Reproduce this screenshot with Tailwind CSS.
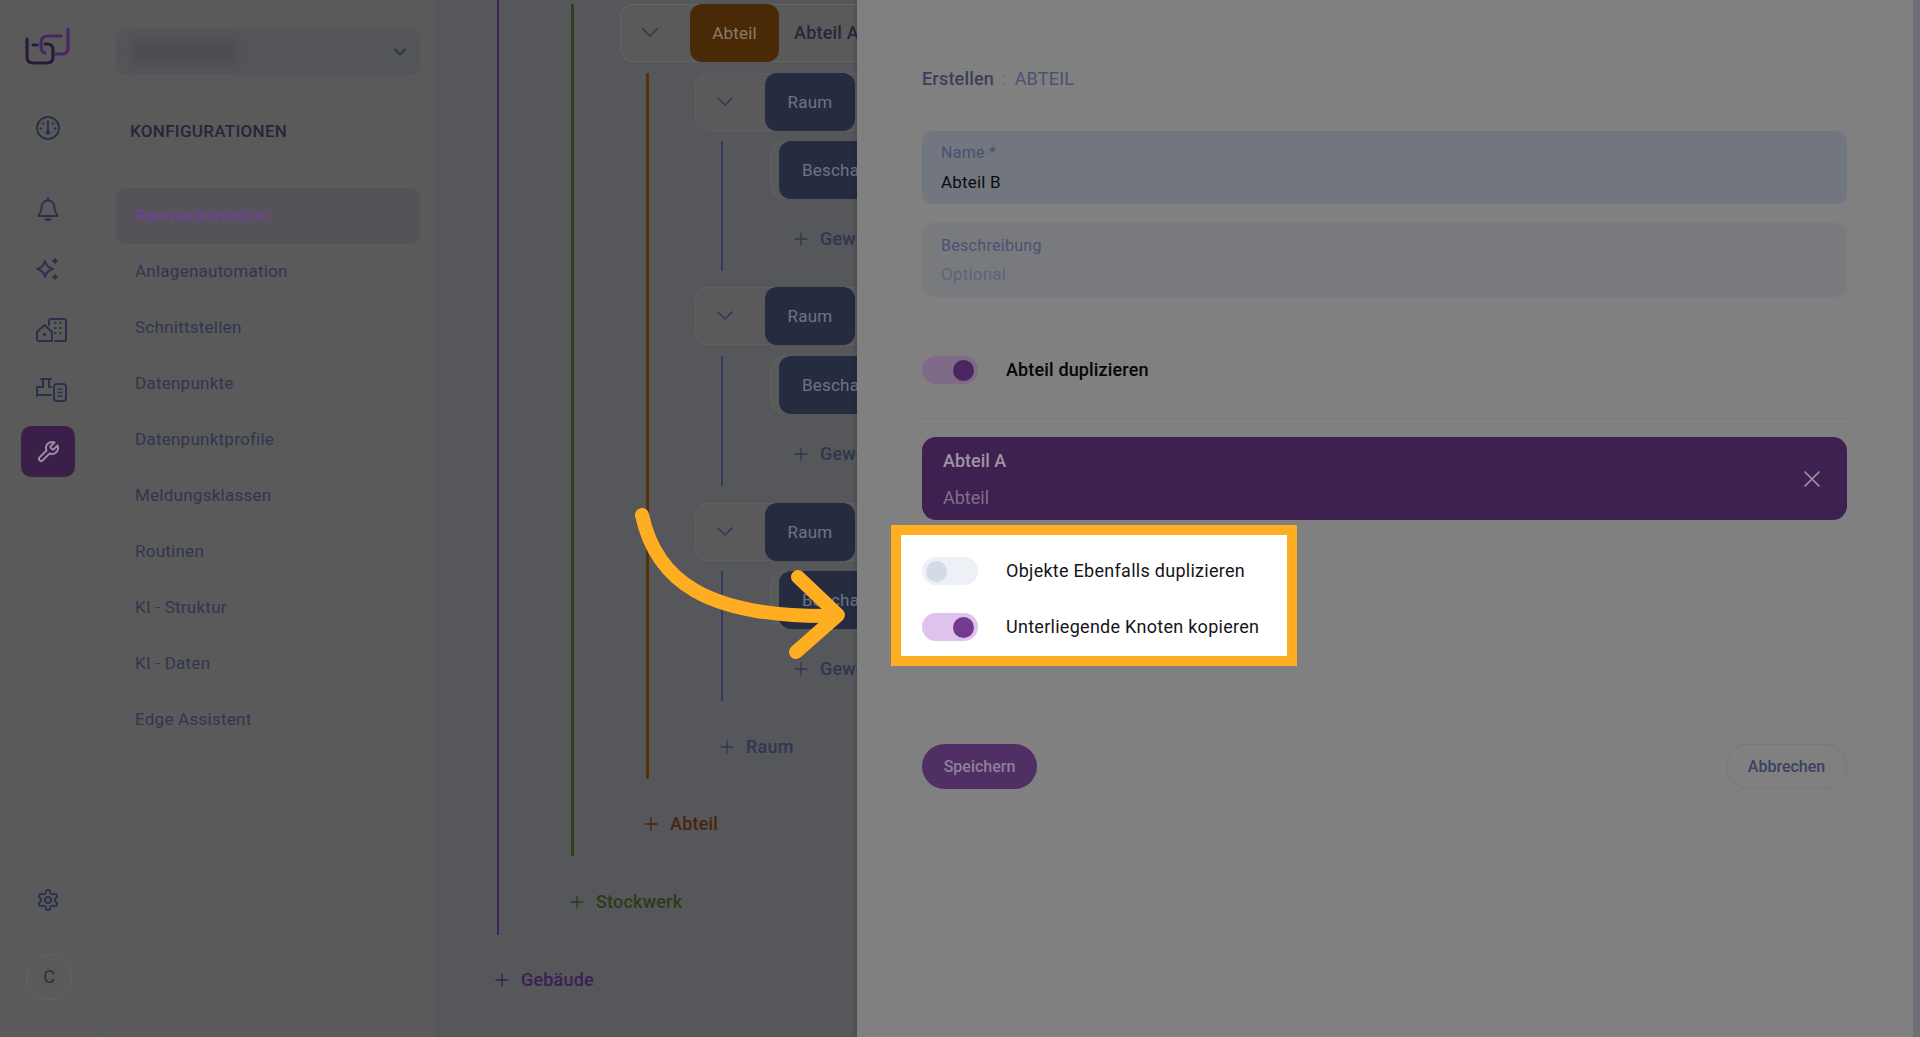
<!DOCTYPE html>
<html lang="de">
<head>
  <meta charset="UTF-8">
  <meta name="viewport" content="width=device-width, initial-scale=1.0">
  <title>Konfigurationen</title>
  <script src="https://cdn.jsdelivr.net/npm/@tailwindcss/browser@4"></script>
</head>
<body class="h-screen overflow-hidden bg-[#808080] font-[Roboto,sans-serif]">
<div class="relative flex h-[1037px] overflow-hidden">

  <!-- Icon rail -->
  <aside class="flex w-[97px] shrink-0 flex-col items-center border-r border-[#4f5762] bg-[#5a5a5a] pt-7 pb-[37px] text-[#2a314b]">
    <svg class="h-[37px] w-[46px]" viewBox="26 28 46 37" fill="none" stroke-width="3.2" stroke-linecap="round" stroke-linejoin="round">
      <path stroke="#2b1a3b" d="M28 39 V57 Q28 63 34 63 H48 Q54 63 54 57 V50 Q54 44 48 44 H46"/>
      <path stroke="#2b1a3b" d="M34 45 H38"/>
      <path stroke="#4a2566" d="M69 29 V48 Q69 54 63 54 H57"/>
      <path stroke="#4a2566" d="M62 36 H49 Q42 36 42 43 V47 Q42 52 46 53"/>
    </svg>
    <svg class="mt-[51px] h-6 w-6" viewBox="0 0 24 24" fill="none" stroke="currentColor" stroke-width="2" stroke-linecap="round">
      <circle cx="12" cy="12" r="11"/>
      <path d="M12 5 V15"/>
      <circle cx="12" cy="16.5" r="2.2" fill="currentColor" stroke="none"/>
      <circle cx="7" cy="7.5" r="1.2" fill="currentColor" stroke="none"/>
      <circle cx="17" cy="7.5" r="1.2" fill="currentColor" stroke="none"/>
      <circle cx="5" cy="12.5" r="1.2" fill="currentColor" stroke="none"/>
      <circle cx="19" cy="12.5" r="1.2" fill="currentColor" stroke="none"/>
    </svg>
    <div class="mt-6 h-px w-[54px] bg-[#4f5762]"></div>
    <svg class="mt-8 h-6 w-6" viewBox="0 0 24 24" fill="none" stroke="currentColor" stroke-width="2" stroke-linecap="round" stroke-linejoin="round">
      <path d="M12 1 V3 M5.5 10 a6.5 6.5 0 0 1 13 0 c0 6 3 8 3 9 H2.5 c0 -1 3 -3 3 -9"/>
      <path d="M10 22.5 H14" stroke-width="2.5"/>
    </svg>
    <svg class="mt-9 h-6 w-6" viewBox="0 0 24 24" fill="none" stroke="currentColor" stroke-width="2" stroke-linejoin="round">
      <path d="M9 4 Q10.5 10.5 17 12 Q10.5 13.5 9 20 Q7.5 13.5 1 12 Q7.5 10.5 9 4Z"/>
      <path fill="currentColor" stroke="none" d="M19 0 Q19.7 3.3 23 4 Q19.7 4.7 19 8 Q18.3 4.7 15 4 Q18.3 3.3 19 0Z M19 16 Q19.7 19.3 23 20 Q19.7 20.7 19 24 Q18.3 20.7 15 20 Q18.3 19.3 19 16Z"/>
    </svg>
    <svg class="mt-[37px] ml-1.5 h-6 w-[31px]" viewBox="0 0 31 24" fill="none" stroke="currentColor" stroke-width="2" stroke-linecap="round" stroke-linejoin="round">
      <path d="M1 21 V14 L8.5 7 L16 14 V23 H3 Q1 23 1 21Z"/>
      <circle cx="8.5" cy="16.5" r="1.7" fill="currentColor" stroke="none"/>
      <path d="M13 7 V3 Q13 1 15 1 H28 Q30 1 30 3 V21 Q30 23 28 23 H19"/>
      <path d="M19 5 h.5 M24 5 h.5 M19 10 h.5 M24 10 h.5 M19 15 h.5 M24 15 h.5" stroke-width="2.2"/>
    </svg>
    <svg class="mt-9 ml-1.5 h-6 w-[31px]" viewBox="0 0 31 24" fill="none" stroke="currentColor" stroke-width="2" stroke-linecap="round" stroke-linejoin="round">
      <path d="M5 1 H15 M7 1 V9 H1 V18 M1 17 H15 M13 1 V9 H15"/>
      <rect x="18" y="6" width="12" height="17" rx="3"/>
      <path d="M22 11 H26 M22 14.5 H26 M22 18 H26" stroke-width="1.5"/>
    </svg>
    <div class="mt-6 flex h-[51px] w-[54px] items-center justify-center rounded-[10px] bg-[#3a2048]">
      <svg class="h-6 w-6" viewBox="0 0 24 24" fill="none" stroke="#9a8da3" stroke-width="2" stroke-linecap="round" stroke-linejoin="round">
        <path d="M14.7 6.3a1 1 0 0 0 0 1.4l1.6 1.6a1 1 0 0 0 1.4 0l3.77-3.77a6 6 0 0 1-7.94 7.94l-6.91 6.91a2.12 2.12 0 0 1-3-3l6.91-6.91a6 6 0 0 1 7.94-7.94l-3.76 3.76z"/>
      </svg>
    </div>
    <svg class="mt-auto h-6 w-6" viewBox="0 0 24 24" fill="none" stroke="currentColor" stroke-width="2" stroke-linecap="round" stroke-linejoin="round">
      <path d="M12.22 2h-.44a2 2 0 0 0-2 2v.18a2 2 0 0 1-1 1.73l-.43.25a2 2 0 0 1-2 0l-.15-.08a2 2 0 0 0-2.73.73l-.22.38a2 2 0 0 0 .73 2.73l.15.1a2 2 0 0 1 1 1.72v.51a2 2 0 0 1-1 1.74l-.15.09a2 2 0 0 0-.73 2.73l.22.38a2 2 0 0 0 2.73.73l.15-.08a2 2 0 0 1 2 0l.43.25a2 2 0 0 1 1 1.73V20a2 2 0 0 0 2 2h.44a2 2 0 0 0 2-2v-.18a2 2 0 0 1 1-1.73l.43-.25a2 2 0 0 1 2 0l.15.08a2 2 0 0 0 2.73-.73l.22-.39a2 2 0 0 0-.73-2.73l-.15-.08a2 2 0 0 1-1-1.74v-.5a2 2 0 0 1 1-1.74l.15-.09a2 2 0 0 0 .73-2.73l-.22-.38a2 2 0 0 0-2.73-.73l-.15.08a2 2 0 0 1-2 0l-.43-.25a2 2 0 0 1-1-1.73V4a2 2 0 0 0-2-2z"/>
      <circle cx="12" cy="12" r="3"/>
    </svg>
    <div class="mt-[42px] ml-0.5 flex h-[46px] w-[46px] items-center justify-center rounded-full border border-[#636363] text-lg text-[#2c2f42]">C</div>
  </aside>

  <!-- Configuration menu -->
  <nav class="w-[340px] shrink-0 border-r border-[#4f5762] bg-[#5a5a5a] pt-7 pl-[19px] pr-4 text-[17px] tracking-[0.25px] text-[#30364f]">
    <div class="flex h-[47px] w-[304px] items-center justify-between rounded-[10px] bg-[#545558] pl-4 pr-3">
      <div class="h-5 w-[105px] rounded bg-[#4f4b52] blur-[5px]"></div>
      <svg class="h-4 w-4" viewBox="0 0 16 16" fill="none" stroke="#2f3650" stroke-width="2" stroke-linecap="round" stroke-linejoin="round"><path d="M3 5.5 L8 10.5 L13 5.5"/></svg>
    </div>
    <h2 class="mt-[45px] mb-[46px] pl-[14px] font-medium leading-[22px] tracking-[0.3px] text-[#23273a]">KONFIGURATIONEN</h2>
    <ul class="w-[304px]">
      <li class="flex h-14 items-center rounded-[10px] bg-[#565259] pl-[19px] text-[#74409a]">Raumautomation</li>
      <li class="flex h-14 items-center pl-[19px]">Anlagenautomation</li>
      <li class="flex h-14 items-center pl-[19px]">Schnittstellen</li>
      <li class="flex h-14 items-center pl-[19px]">Datenpunkte</li>
      <li class="flex h-14 items-center pl-[19px]">Datenpunktprofile</li>
      <li class="flex h-14 items-center pl-[19px]">Meldungsklassen</li>
      <li class="flex h-14 items-center pl-[19px]">Routinen</li>
      <li class="flex h-14 items-center pl-[19px]">KI - Struktur</li>
      <li class="flex h-14 items-center pl-[19px]">KI - Daten</li>
      <li class="flex h-14 items-center pl-[19px]">Edge Assistent</li>
    </ul>
  </nav>

  <!-- Tree -->
  <main class="w-[420px] shrink-0 overflow-hidden bg-[#55575a] text-lg tracking-[0.2px]">
    <div class="ml-[60px] border-l-2 border-[#40215c] pt-1 pb-[13px] pl-[72px]">
      <div class="border-l-[3px] border-[#2f3f1b] pb-3 pl-[46px]">
        <div class="flex h-[58px] w-[400px] items-center rounded-[14px] bg-[#5a5a5b] ring-1 ring-inset ring-[#63636a]">
          <div class="flex w-[70px] pl-[22px]"><svg class="h-4 w-4" viewBox="0 0 16 16" fill="none" stroke="#2f3650" stroke-width="1.6" stroke-linecap="round" stroke-linejoin="round"><path d="M1 4 L8 11 L15 4"/></svg></div>
          <div class="flex h-[58px] w-[89px] items-center justify-center rounded-[12px] bg-[#4a2a06] text-[17px] text-[#8a7d6d]">Abteil</div>
          <span class="ml-[15px] font-medium text-[#24283a]">Abteil A</span>
        </div>
        <div class="mt-[11px] ml-[26px] border-l-[3px] border-[#553208] pb-3 pl-[46px]">

          <div class="flex h-[58px] w-[400px] items-center rounded-[14px] bg-[#5a5a5b] ring-1 ring-inset ring-[#5f5f64]">
            <div class="flex w-[70px] pl-[22px]"><svg class="h-4 w-4" viewBox="0 0 16 16" fill="none" stroke="#2f3650" stroke-width="1.6" stroke-linecap="round" stroke-linejoin="round"><path d="M1 4 L8 11 L15 4"/></svg></div>
            <div class="flex h-[58px] w-[90px] items-center justify-center rounded-[12px] bg-[#252c40] text-[17px] text-[#6f7482]">Raum</div>
          </div>
          <div class="mt-[10px] ml-[26px] h-[130px] border-l-2 border-[#333c5c] pl-[47px]">
            <div class="flex h-[58px] w-[300px] rounded-[14px] bg-[#5a5a5b] pl-[9px] ring-1 ring-inset ring-[#5f5f64]">
              <div class="flex h-[58px] w-[200px] items-center rounded-[12px] bg-[#252c40] pl-[23px] text-[17px] text-[#6f7482]">Beschattung</div>
            </div>
            <div class="mt-5 ml-6 flex h-10 items-center gap-3 font-medium text-[#2f3650]">
              <svg class="h-3.5 w-3.5 shrink-0" viewBox="0 0 14 14" stroke="currentColor" stroke-width="1.3" stroke-linecap="round"><path d="M7 1 V13 M1 7 H13"/></svg>
              <span class="whitespace-nowrap">Gewerk</span>
            </div>
          </div>

          <div class="mt-4 flex h-[58px] w-[400px] items-center rounded-[14px] bg-[#5a5a5b] ring-1 ring-inset ring-[#5f5f64]">
            <div class="flex w-[70px] pl-[22px]"><svg class="h-4 w-4" viewBox="0 0 16 16" fill="none" stroke="#2f3650" stroke-width="1.6" stroke-linecap="round" stroke-linejoin="round"><path d="M1 4 L8 11 L15 4"/></svg></div>
            <div class="flex h-[58px] w-[90px] items-center justify-center rounded-[12px] bg-[#252c40] text-[17px] text-[#6f7482]">Raum</div>
          </div>
          <div class="mt-[11px] ml-[26px] h-[130px] border-l-2 border-[#333c5c] pl-[47px]">
            <div class="flex h-[58px] w-[300px] rounded-[14px] bg-[#5a5a5b] pl-[9px] ring-1 ring-inset ring-[#5f5f64]">
              <div class="flex h-[58px] w-[200px] items-center rounded-[12px] bg-[#252c40] pl-[23px] text-[17px] text-[#6f7482]">Beschattung</div>
            </div>
            <div class="mt-5 ml-6 flex h-10 items-center gap-3 font-medium text-[#2f3650]">
              <svg class="h-3.5 w-3.5 shrink-0" viewBox="0 0 14 14" stroke="currentColor" stroke-width="1.3" stroke-linecap="round"><path d="M7 1 V13 M1 7 H13"/></svg>
              <span class="whitespace-nowrap">Gewerk</span>
            </div>
          </div>

          <div class="mt-[17px] flex h-[58px] w-[400px] items-center rounded-[14px] bg-[#5a5a5b] ring-1 ring-inset ring-[#5f5f64]">
            <div class="flex w-[70px] pl-[22px]"><svg class="h-4 w-4" viewBox="0 0 16 16" fill="none" stroke="#2f3650" stroke-width="1.6" stroke-linecap="round" stroke-linejoin="round"><path d="M1 4 L8 11 L15 4"/></svg></div>
            <div class="flex h-[58px] w-[90px] items-center justify-center rounded-[12px] bg-[#252c40] text-[17px] text-[#6f7482]">Raum</div>
          </div>
          <div class="mt-[10px] ml-[26px] h-[130px] border-l-2 border-[#333c5c] pl-[47px]">
            <div class="flex h-[58px] w-[300px] rounded-[14px] bg-[#5a5a5b] pl-[9px] ring-1 ring-inset ring-[#5f5f64]">
              <div class="flex h-[58px] w-[200px] items-center rounded-[12px] bg-[#252c40] pl-[23px] text-[17px] text-[#6f7482]">Beschattung</div>
            </div>
            <div class="mt-5 ml-6 flex h-10 items-center gap-3 font-medium text-[#2f3650]">
              <svg class="h-3.5 w-3.5 shrink-0" viewBox="0 0 14 14" stroke="currentColor" stroke-width="1.3" stroke-linecap="round"><path d="M7 1 V13 M1 7 H13"/></svg>
              <span class="whitespace-nowrap">Gewerk</span>
            </div>
          </div>

          <div class="mt-[26px] ml-[25px] flex h-10 items-center gap-3 font-medium text-[#2f3650]">
            <svg class="h-3.5 w-3.5 shrink-0" viewBox="0 0 14 14" stroke="currentColor" stroke-width="1.3" stroke-linecap="round"><path d="M7 1 V13 M1 7 H13"/></svg>
            <span>Raum</span>
          </div>
        </div>
        <div class="mt-[25px] ml-6 flex h-10 items-center gap-3 font-medium text-[#4a2410]">
          <svg class="h-3.5 w-3.5 shrink-0" viewBox="0 0 14 14" stroke="currentColor" stroke-width="1.3" stroke-linecap="round"><path d="M7 1 V13 M1 7 H13"/></svg>
          <span>Abteil</span>
        </div>
      </div>
      <div class="mt-[26px] -ml-px flex h-10 items-center gap-3 font-medium text-[#2c3c18]">
        <svg class="h-3.5 w-3.5 shrink-0" viewBox="0 0 14 14" stroke="currentColor" stroke-width="1.3" stroke-linecap="round"><path d="M7 1 V13 M1 7 H13"/></svg>
        <span>Stockwerk</span>
      </div>
    </div>
    <div class="mt-[25px] ml-[58px] flex h-10 items-center gap-3 font-medium text-[#3d1e55]">
      <svg class="h-3.5 w-3.5 shrink-0" viewBox="0 0 14 14" stroke="currentColor" stroke-width="1.3" stroke-linecap="round"><path d="M7 1 V13 M1 7 H13"/></svg>
      <span>Gebäude</span>
    </div>
  </main>

  <!-- Create panel -->
  <section class="flex w-[1056px] shrink-0 flex-col bg-[#808080] pt-[68px] pl-[65px] pr-[66px] shadow-[-2px_0_4px_rgba(0,0,0,0.12)]">
    <div class="flex h-[22px] items-center text-lg leading-[22px] tracking-[0.2px]">
      <span class="font-medium text-[#3a4059]">Erstellen</span>
      <span class="ml-2 text-[#6f7379]">:</span>
      <span class="ml-2 text-[#4a5272]">ABTEIL</span>
    </div>
    <div class="mt-[41px] flex h-[73px] flex-col justify-center gap-[11px] rounded-[10px] bg-[#72777f] pl-[19px]">
      <span class="text-base leading-[19px] tracking-[0.3px] text-[#495270]">Name *</span>
      <span class="text-[17px] leading-[19px] tracking-[0.2px] text-[#0b0b0d]">Abteil B</span>
    </div>
    <div class="mt-[19px] flex h-[74px] flex-col justify-center gap-[10px] rounded-[10px] bg-[#787a7e] pl-[19px]">
      <span class="text-base leading-[19px] tracking-[0.3px] text-[#4b5370]">Beschreibung</span>
      <span class="text-[17px] leading-[19px] tracking-[0.2px] text-[#5c6478]">Optional</span>
    </div>
    <div class="mt-[59px] flex h-7 items-center gap-7">
      <div class="flex h-7 w-14 items-center justify-end rounded-full bg-[#7f6a87] pr-1">
        <div class="h-[21px] w-[21px] rounded-full bg-[#4a2560]"></div>
      </div>
      <span class="text-lg font-medium tracking-[0.15px] text-[#050507]">Abteil duplizieren</span>
    </div>
    <div class="mt-[34px] h-px bg-[#777878]"></div>
    <div class="mt-[18px] flex h-[83px] items-center justify-between rounded-[14px] bg-[#3e2051] pl-[21px] pr-[27px] text-lg">
      <div class="flex flex-col gap-4 leading-[21px]">
        <span class="font-medium text-[#9e93a4]">Abteil A</span>
        <span class="text-[#80708b]">Abteil</span>
      </div>
      <svg class="h-4 w-4" viewBox="0 0 16 16" stroke="#a09aa8" stroke-width="1.6" stroke-linecap="round"><path d="M1 1 L15 15 M15 1 L1 15"/></svg>
    </div>
    <div class="mt-[5px] -ml-[31px] flex w-[406px] flex-col gap-7 border-[10px] border-[#ffae21] bg-white pt-[22px] pb-[15px] pl-[21px] text-lg tracking-[0.28px] text-[#15151a]">
      <div class="flex h-7 items-center gap-7">
        <div class="flex h-7 w-14 items-center rounded-full bg-[#edf0f5] pl-1">
          <div class="h-[21px] w-[21px] rounded-full bg-[#d4dbe6]"></div>
        </div>
        <span>Objekte Ebenfalls duplizieren</span>
      </div>
      <div class="flex h-7 items-center gap-7">
        <div class="flex h-7 w-14 items-center justify-end rounded-full bg-[#dfc3ec] pr-1">
          <div class="h-[21px] w-[21px] rounded-full bg-[#733a8f]"></div>
        </div>
        <span>Unterliegende Knoten kopieren</span>
      </div>
    </div>
    <div class="mt-[78px] flex items-center justify-between text-base font-medium">
      <button class="h-[45px] w-[115px] rounded-full bg-[#4f2f64] text-[#90809a]">Speichern</button>
      <button class="h-[45px] w-[121px] rounded-full border border-[#757882] text-[#3a4160]">Abbrechen</button>
    </div>
  </section>

  <!-- Scrollbar -->
  <div class="w-[7px] shrink-0 bg-[#6f6f76]"></div>

  <!-- Annotation arrow -->
  <svg class="pointer-events-none absolute top-0 left-0 h-[1037px] w-[1920px]" viewBox="0 0 1920 1037" fill="none" stroke="#ffae21" stroke-width="14" stroke-linecap="round" stroke-linejoin="round">
    <path d="M642 515 C656 580 705 618 835 616"/>
    <path d="M798 577 L838 615 L796 652"/>
  </svg>
</div>
</body>
</html>
